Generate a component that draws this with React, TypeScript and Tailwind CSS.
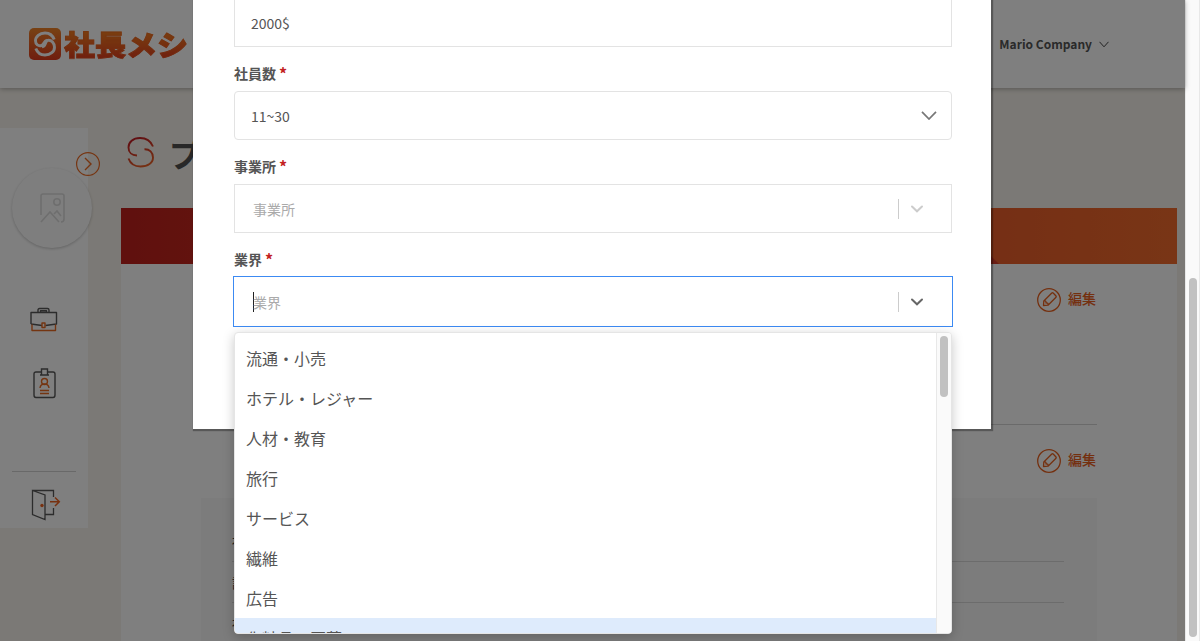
import React from "react";

const industries = ["流通・小売", "ホテル・レジャー", "人材・教育", "旅行", "サービス", "繊維", "広告", "化粧品・医薬"];

function Logo() {
  return (
    <div className="flex items-center gap-[3px]">
      <svg width="32" height="32" viewBox="0 0 32 32" fill="none">
        <defs>
          <linearGradient id="logo" x1="0" y1="0" x2="0" y2="1">
            <stop offset="0" stopColor="#f08428" />
            <stop offset="1" stopColor="#e03c1e" />
          </linearGradient>
        </defs>
        <rect width="32" height="32" rx="5" fill="url(#logo)" />
        <path d="M25.200 11.500C23.500 7 20 5 16 5C10.500 5 6.500 8.500 6.500 12.800C6.500 16.500 9.500 18.500 12.500 17.500C15.500 16.500 14.500 13 18 12.200" stroke="#fff" strokeWidth="2.900" />
        <path d="M6.800 20.500C8.500 25 12 27 16 27C21.500 27 25.500 23.500 25.500 19.200C25.500 15.500 22.500 11.500 18.500 12.300C15.500 13.500 17.500 18 13 18.800" stroke="#fff" strokeWidth="2.900" />
      </svg>
      <span className="origin-center scale-y-[0.92] bg-linear-to-b from-[#f5821f] to-[#e03c1e] bg-clip-text text-[31px] leading-8 font-black text-transparent [-webkit-text-stroke:1px_#e8602080]">
        社長メシ
      </span>
    </div>
  );
}

function Header() {
  return (
    <header className="relative flex h-22 shrink-0 items-center justify-between bg-white pr-[76px] pl-[29px] shadow-[0_1px_5px_rgba(0,0,0,0.3)]">
      <Logo />
      <div className="flex items-center gap-[7px] text-[12px] font-bold text-[#555]">
        <span>Mario Company</span>
        <svg width="10" height="7" viewBox="0 0 10 7" fill="none" stroke="#444" strokeWidth="1">
          <path d="M.5 .8L5 5.800L9.500 .8" />
        </svg>
      </div>
    </header>
  );
}

function Sidebar() {
  return (
    <aside className="relative mt-10 flex h-100 w-22 shrink-0 flex-col bg-white">
      <div className="absolute top-10 left-3 flex size-20 items-center justify-center rounded-full bg-[#fdfdfd] shadow-[0_1px_3px_rgba(0,0,0,0.22)]">
        <svg width="25" height="30" viewBox="0 0 25 30" fill="none" stroke="#dcdcdc" strokeWidth="1.600">
          <path d="M1 22V3Q1 1 3 1H22Q24 1 24 3V26Q24 29 21 29M1 29L10 19L19 29M14 21L17 18L21 23" />
          <circle cx="17" cy="9" r="3.200" />
        </svg>
      </div>
      <svg className="absolute top-6 left-[76px]" width="24" height="24" viewBox="0 0 24 24" fill="none" stroke="#ec6a23" strokeWidth="1.200">
        <circle cx="12" cy="12" r="11.400" />
        <path d="M9 6L15 12L9 18" strokeWidth="1.400" />
      </svg>
      <svg className="mt-[179px] ml-[29px]" width="29" height="26" viewBox="0 0 29 26" fill="none" stroke="#585858" strokeWidth="1.400" strokeLinejoin="round">
        <path d="M9 5V3Q9 1.500 10.500 1.500H18.500Q20 1.500 20 3V5M11.500 5V3.800H17.500V5M2 17V5.500H27.500V17L16.500 18.500M2 17L13 18.500" />
        <path d="M3 17.500V23.500H26.500V17.500M13 16H16V20.500H13Z" stroke="#e96a23" />
      </svg>
      <svg className="mt-[35px] ml-[33px]" width="23" height="31" viewBox="0 0 23 31" fill="none" stroke="#585858" strokeWidth="1.400">
        <path d="M8 4H3Q1 4 1 6V27Q1 29.500 3 29.500H20Q22 29.500 22 27V6Q22 4 20 4H15M7 7H16M8.500 7V1H14.500V7" />
        <g stroke="#e96a23">
          <circle cx="11.500" cy="13.500" r="3" />
          <path d="M7 20Q7.500 16 11.500 16Q15.500 16 16 20M7 22.500H16M7 25.500H16" />
        </g>
      </svg>
      <div className="mx-3 mt-[72px] h-px bg-[#d2d2d2]" />
      <svg className="mt-[17px] ml-[31px]" width="30" height="32" viewBox="0 0 30 32" fill="none" stroke="#585858" strokeWidth="1.300">
        <path d="M1.500 1.500L14 6V30.500L1.500 25.500ZM1.500 1.500H22.500V8M14 25.500H22.500V19" />
        <path d="M19 12.800H28M24 8.500L28.300 12.800L24 17" stroke="#ef6321" strokeWidth="1.500" />
        <circle cx="11" cy="16.500" r="1.700" fill="#ef6321" stroke="none" />
      </svg>
    </aside>
  );
}

function EditButton() {
  return (
    <div className="flex h-6 items-center justify-end gap-[7px] pr-px text-[14px] font-medium text-[#e9611f]">
      <svg width="24" height="24" viewBox="0 0 24 24" fill="none" stroke="currentColor" strokeWidth="1.300" strokeLinejoin="round">
        <circle cx="12" cy="12" r="11.300" />
        <path d="M6.500 17.500L6.800 13L14.800 5Q15.500 4.500 16.200 5L19 8Q19.500 8.700 19 9.300L11 17.200ZM6.800 13Q9.500 12.500 9 15Q11.500 14.500 11 17.200" />
      </svg>
      <span className="pb-1 leading-5">編集</span>
    </div>
  );
}

function ProfilePage() {
  return (
    <main className="ml-[33px] flex w-[1056px] shrink-0 flex-col">
      <div className="mt-10 flex h-20 items-start pt-2 pl-[6px]">
        <svg className="mt-px" width="28" height="31" viewBox="0 0 28 31" fill="none" stroke="url(#smark)" strokeWidth="1.900">
          <defs>
            <linearGradient id="smark" gradientUnits="userSpaceOnUse" x1="6" y1="0" x2="20" y2="30">
              <stop offset="0" stopColor="#c01824" />
              <stop offset="1" stopColor="#ed6427" />
            </linearGradient>
          </defs>
          <path d="M26 9.500C23.500 3.500 18 1 13 1C6 1 1.500 5 1.500 10.500C1.500 15.500 5 18.500 10 18.500" />
          <path d="M1.500 21.500C3.500 27 8 29.500 13.500 29.500C21 29.500 26 26 26 20.500C26 15.500 22.500 12 17.500 12.200" />
        </svg>
        <h1 className="mt-px ml-[14px] text-[32px] leading-8 font-bold whitespace-nowrap text-[#505050]">プ</h1>
      </div>
      <div className="h-14 shrink-0 bg-linear-to-r from-[#c0201c] via-[#e04426] to-[#f26b2c] pl-[862px]">
        <svg className="h-14 w-4" viewBox="0 0 16 56" fill="#d33a28">
          <path d="M0 40L16 56H0Z" />
        </svg>
      </div>
      <section className="flex flex-1 flex-col bg-white px-20">
        <div className="flex h-[161px] flex-col border-b border-[#d4d4d4] pt-6">
          <EditButton />
        </div>
        <div className="flex h-[73px] shrink-0 flex-col pt-6">
          <EditButton />
        </div>
        <div className="flex-1 bg-[#f9f9f9] pr-[33px] pl-[31px] pt-[23px] text-[14px] text-[#444]">
          <div className="flex h-[41px] items-center border-b border-[#d8d8d8]">社名</div>
          <div className="flex h-[41px] items-center border-b border-[#d8d8d8]">設立</div>
          <div className="flex h-[41px] items-center">社員数</div>
        </div>
      </section>
    </main>
  );
}

function Label({ children }: { children: string }) {
  return (
    <label className="flex gap-[3px] text-[14px] leading-5 font-bold text-[#555]">
      {children}
      <span className="text-[16px] text-[#c32222]">*</span>
    </label>
  );
}

function Chevron({ color }: { color: string }) {
  return (
    <svg width="14" height="8" viewBox="0 0 14 8" fill="none" stroke={color} strokeWidth="2" strokeLinecap="round">
      <path d="M2 1.500L7 6.300L12 1.500" />
    </svg>
  );
}

function IndustryMenu() {
  return (
    <div className="absolute top-[55px] left-0 flex h-[302px] w-[718px] overflow-hidden rounded-[4px] border border-[#e5e5e5] bg-white shadow-[0_3px_12px_rgba(0,0,0,0.22)]">
      <ul className="flex-1 overflow-hidden pt-[5px] text-[16px] text-[#555]">
        {industries.map((item, i) => (
          <li key={item} className={i === 7 ? "flex h-10 items-center bg-[#deebfc] px-[11px]" : "flex h-10 items-center px-[11px]"}>
            {item}
          </li>
        ))}
      </ul>
      <div className="flex w-[15px] justify-center border-l border-[#e8e8e8] bg-[#fafafa] pt-[3px]">
        <div className="h-[61px] w-2 rounded-full bg-[#c1c1c1]" />
      </div>
    </div>
  );
}

function Modal() {
  return (
    <div className="h-[429px] w-[798px] bg-white px-10 text-[14px] text-[#555] shadow-[1px_1px_1px_1px_rgba(0,0,0,0.3)]">
      <div className="ml-px flex h-[47px] w-[718px] items-center border border-t-0 border-[#e3e3e3] px-4">2000$</div>
      <div className="mt-4 ml-px"><Label>社員数</Label></div>
      <div className="mt-2 ml-px flex h-[49px] w-[718px] items-center justify-between rounded-[4px] border border-[#e3e3e3] pr-[14px] pl-4">
        <span className="pt-px">11~30</span>
        <svg width="16" height="9" viewBox="0 0 16 9" fill="none" stroke="#777" strokeWidth="1.700">
          <path d="M1 .8L8 8L15 .8" />
        </svg>
      </div>
      <div className="mt-4 ml-px"><Label>事業所</Label></div>
      <div className="mt-2 ml-px flex h-[49px] w-[718px] items-center border border-[#e3e3e3] pr-[27px] pl-[18px] text-[#aaa]">
        <span className="flex-1 pt-px">事業所</span>
        <span className="mr-[11px] h-5 w-px bg-[#ccc]" />
        <Chevron color="#ccc" />
      </div>
      <div className="mt-4 ml-px"><Label>業界</Label></div>
      <div className="relative mt-[7px] flex h-[51px] w-[720px] items-center border border-[#3c8af3] pr-[28px] pl-[19px] text-[#aaa]">
        <span className="h-5 w-px bg-[#222]" />
        <span className="-ml-px flex-1 pt-px">業界</span>
        <span className="mr-[11px] h-5 w-px bg-[#ccc]" />
        <Chevron color="#666" />
        <IndustryMenu />
      </div>
    </div>
  );
}

export default function App() {
  return (
    <div className="flex h-[641px] w-[1200px] overflow-hidden font-['Noto_Sans_CJK_JP','Noto_Sans',sans-serif]">
      <div className="relative flex w-[1185px] shrink-0 flex-col bg-[#f7f3ec]">
        <Header />
        <div className="flex flex-1">
          <Sidebar />
          <ProfilePage />
        </div>
        <div className="absolute inset-0 flex items-start justify-center bg-black/50 pr-px">
          <Modal />
        </div>
      </div>
      <div className="flex w-[15px] items-end justify-center border-x border-[#e8e8e8] bg-[#fafafa] pb-1">
        <div className="h-[359px] w-2 rounded-full bg-[#c1c1c1]" />
      </div>
    </div>
  );
}
